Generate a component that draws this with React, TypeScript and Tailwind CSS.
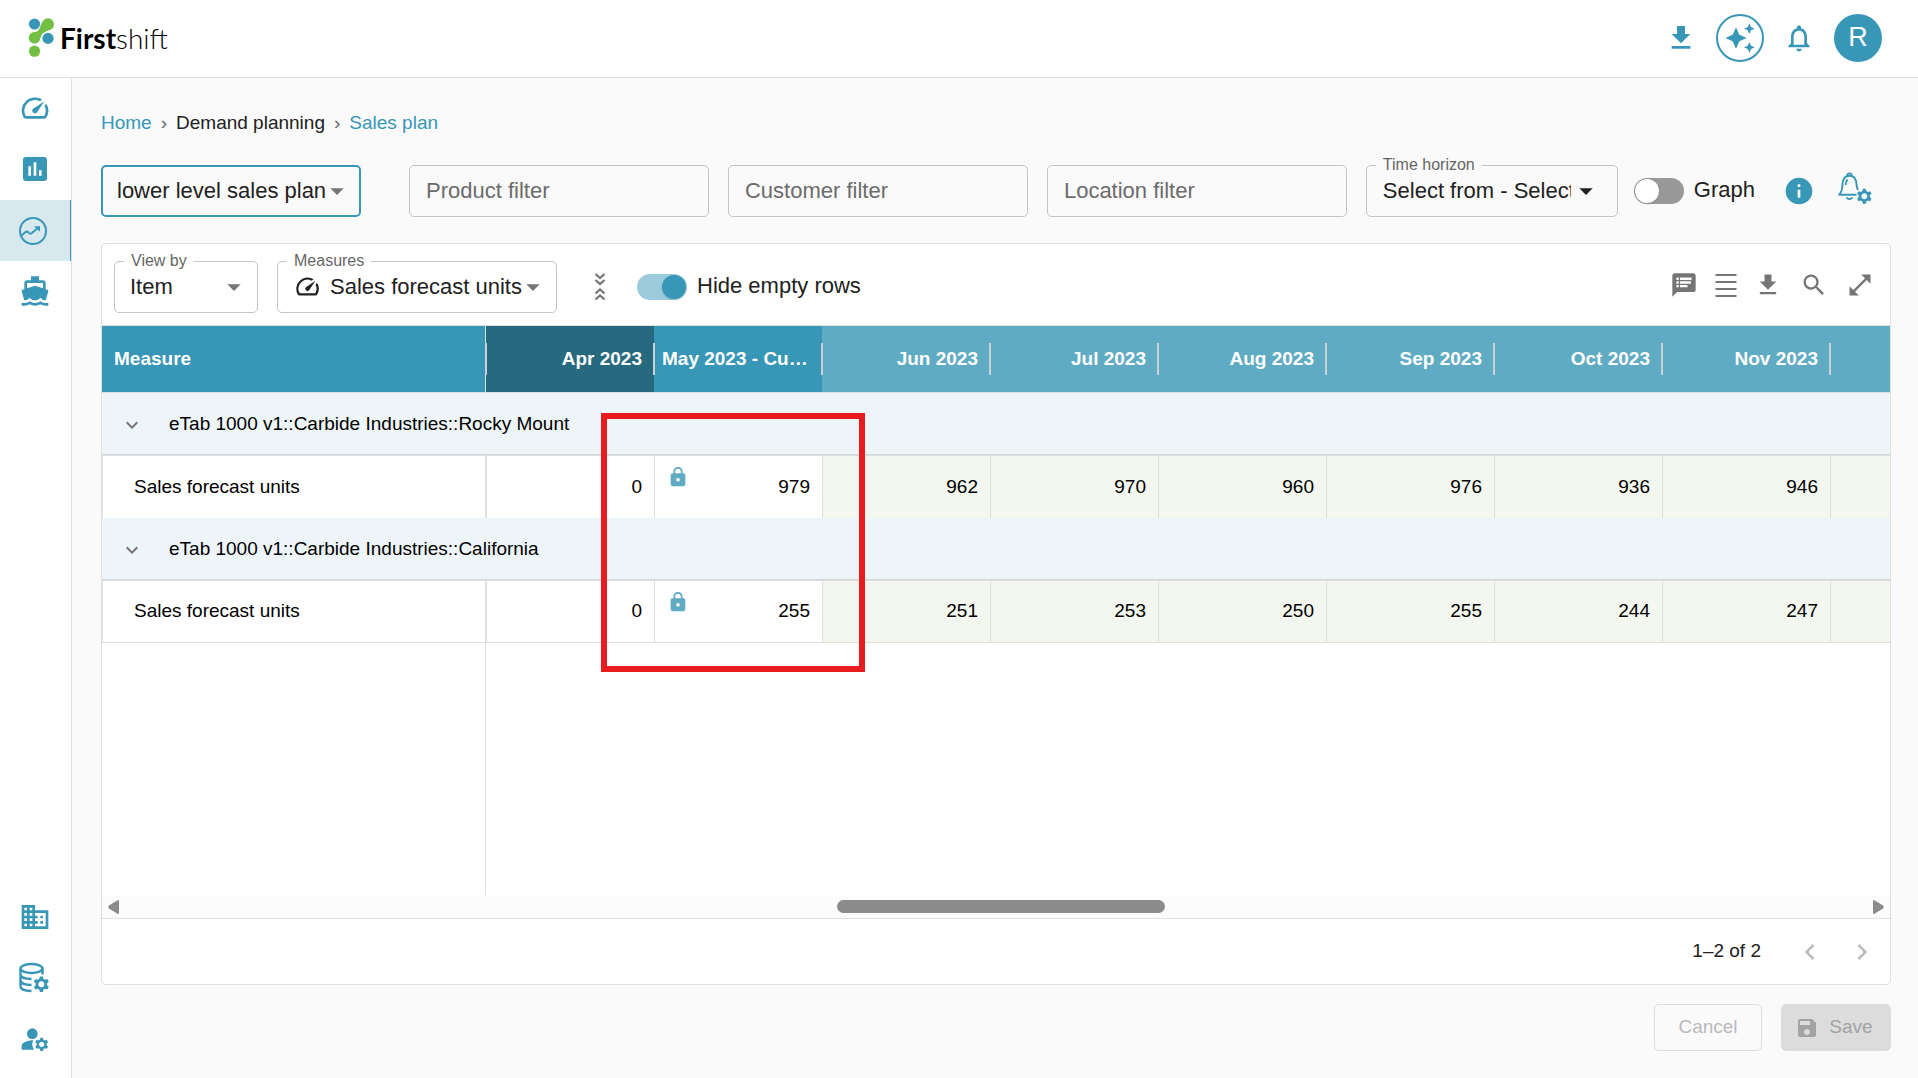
import type { ReactNode } from "react";
import {
    MdArrowDropDown,
    MdAssessment,
    MdAutoAwesome,
    MdChevronLeft,
    MdChevronRight,
    MdDirectionsBoat,
    MdDomain,
    MdExpandMore,
    MdInfo,
    MdLock,
    MdManageAccounts,
    MdNotificationsNone,
    MdOpenInFull,
    MdOutlineSpeed,
    MdSave,
    MdSearch,
} from "react-icons/md";

const GEAR =
    "M20.75 16c0-.22-.03-.42-.06-.63l1.14-1.01-1-1.73-1.45.49c-.32-.27-.68-.48-1.08-.63L18 11h-2l-.3 1.49c-.4.15-.76.36-1.08.63l-1.45-.49-1 1.73 1.14 1.01c-.03.21-.06.41-.06.63s.03.42.06.63l-1.14 1.01 1 1.73 1.45-.49c.32.27.68.48 1.08.63L16 21h2l.3-1.49c.4-.15.76-.36 1.08-.63l1.45.49 1-1.73-1.14-1.01c.03-.21.06-.41.06-.63zM17 18c-1.1 0-2-.9-2-2s.9-2 2-2 2 .9 2 2-.9 2-2 2z";

const months = [
    { label: "Apr 2023", head: "bg-[#276a80]", cell: "bg-white" },
    { label: "May 2023 - Current", head: "bg-[#3896b7]", cell: "bg-white" },
    { label: "Jun 2023", head: "bg-[#5fabc4]", cell: "bg-[#f3f7f0]" },
    { label: "Jul 2023", head: "bg-[#5fabc4]", cell: "bg-[#f3f7f0]" },
    { label: "Aug 2023", head: "bg-[#5fabc4]", cell: "bg-[#f3f7f0]" },
    { label: "Sep 2023", head: "bg-[#5fabc4]", cell: "bg-[#f3f7f0]" },
    { label: "Oct 2023", head: "bg-[#5fabc4]", cell: "bg-[#f3f7f0]" },
    { label: "Nov 2023", head: "bg-[#5fabc4]", cell: "bg-[#f3f7f0]" },
];

const groups = [
    { name: "eTab 1000 v1::Carbide Industries::Rocky Mount", values: [0, 979, 962, 970, 960, 976, 936, 946] },
    { name: "eTab 1000 v1::Carbide Industries::California", values: [0, 255, 251, 253, 250, 255, 244, 247] },
];

const DownloadIcon = ({ size }: { size: number }) => (
    <svg width={size} height={size} viewBox="0 0 24 24" fill="currentColor">
        <path d="M19 9h-4V3H9v6H5l7 7 7-7zM5 18v2h14v-2H5z" />
    </svg>
);

const Logo = () => (
    <div className="flex items-center gap-1.5">
        <svg width="26" height="40" viewBox="0 0 26 40">
            <path d="M5 14.500 C13 14 11 8 15 3 L23 11 C18 14 14 13 11 23 Z" fill="#72bf44" />
            <circle cx="6.5" cy="6" r="5.6" fill="#3896b7" />
            <circle cx="20" cy="6.2" r="6" fill="#72bf44" />
            <circle cx="6.5" cy="19.800" r="5.800" fill="#72bf44" />
            <circle cx="20" cy="20.400" r="6.600" fill="white" />
            <circle cx="20" cy="20.400" r="5.600" fill="#3896b7" />
            <circle cx="6.500" cy="33.200" r="5.600" fill="#72bf44" />
        </svg>
        <span className="font-[Lato] text-[28px] leading-8 text-black">
            <b className="font-bold">First</b>
            <span className="font-light">shift</span>
        </span>
    </div>
);

const TrendIcon = () => (
    <svg width="28" height="28" viewBox="0 0 28 28" fill="none" stroke="currentColor" strokeWidth="2">
        <circle cx="14" cy="14" r="13" />
        <path d="M2 19 L6.5 15 Q8 14 9.5 15.5 Q11.5 18 13.5 15.5 L19.5 10.5" />
        <path d="M15 9.2h6v5.6z" fill="currentColor" stroke="none" />
    </svg>
);

const DatabaseGearIcon = () => (
    <svg width="32" height="32" viewBox="0 0 32 32" fill="none" stroke="currentColor" strokeWidth="2.4">
        <ellipse cx="12.5" cy="6.500" rx="11" ry="4.500" />
        <path d="M1.500 6.500v18c0 2.500 4 4.500 11 4.500M23.500 6.500v6M1.500 12.500c0 2.500 4 4.500 11 4.500M1.500 18.500c0 2.500 4 4.500 11 4.500" />
        <path d={GEAR} transform="translate(-4 -2.500) scale(1.550)" fill="currentColor" stroke="none" />
    </svg>
);

const BellGearIcon = () => (
    <svg width="34" height="34" viewBox="0 0 34 34" fill="none" stroke="currentColor" strokeWidth="1.9">
        <path d="M1 22.500 C4.500 20 4 17 4.500 12 C5 6 8 3.800 11.500 3.800 C15 3.800 18 6 18.500 12 C18.700 15 19 16.500 20 18" />
        <path d="M.5 22.700H18.500M9.300 3.600a2.200 2.200 0 0 1 4.400 0M8.500 25.500c1.500 2 4.500 2 6 0M7.600 13c0-3 .8-4.500 2-5.500" />
        <path d={GEAR} transform="translate(.800 .200) scale(1.500)" fill="currentColor" stroke="none" />
    </svg>
);

const CollapseIcon = () => (
    <svg width="20" height="28" viewBox="0 0 20 28" fill="none" stroke="currentColor" strokeWidth="2.2">
        <path d="M5.500 1 10 5 14.500 1M5.500 7 10 11 14.500 7M5.500 20.500 10 16.500 14.500 20.500M5.500 26.500 10 22.500 14.500 26.500" />
    </svg>
);

const CommentIcon = () => (
    <svg width="28" height="28" viewBox="0 0 24 24">
        <path d="M20 2H4c-1.100 0-2 .900-2 2v18l4-4h14c1.100 0 2-.900 2-2V4c0-1.100-.900-2-2-2z" fill="currentColor" />
        <path d="M5.500 5.500h2v2.200h-2zM5.500 8.700h2v2.200h-2zM5.500 11.900h2V14h-2zM8.600 5.500h9.900v2.200H8.600zM8.600 8.700h9.400v2.200H8.600zM8.600 11.900h6.400V14H8.600z" fill="white" />
    </svg>
);

const LinesIcon = () => (
    <svg width="28" height="28" viewBox="0 0 28 28" fill="currentColor">
        <path d="M3.500 3h21v2h-21zM3.500 10h21v2h-21zM3.500 17h21v2h-21zM3.500 24h21v2h-21z" />
    </svg>
);

const SideItem = ({ label, active, children }: { label: string; active?: boolean; children: ReactNode }) => (
    <a
        href="#"
        aria-label={label}
        className={
            active
                ? "flex h-[61px] items-center justify-center border-r border-[#3896b7] bg-[#d7e9ef] pr-1"
                : "flex h-[61px] items-center justify-center pr-0.5 pb-px"
        }
    >
        {children}
    </a>
);

type SelectFieldProps = {
    id: string;
    value: string;
    label?: string;
    width: string;
    pad?: string;
    arrow?: string;
    surface?: string;
    border?: string;
    icon?: ReactNode;
};

const SelectField = ({
    id,
    value,
    label,
    width,
    pad = "pl-[15px] pr-9",
    arrow = "right-2 text-[#757575]",
    surface = "bg-white",
    border = "border border-[#c4c4c4]",
    icon,
}: SelectFieldProps) => (
    <div className={`relative shrink-0 ${width}`}>
        <select
            id={id}
            aria-label={label ?? "Plan"}
            className={`h-[52px] w-full appearance-none rounded-[5px] pb-0.5 text-[22px] text-[#212121] ${border} ${surface} ${pad}`}
        >
            <option>{value}</option>
        </select>
        {label && (
            <label htmlFor={id} className={`absolute -top-2 left-2.5 px-[7px] text-base leading-4 text-[#666] ${surface}`}>
                {label}
            </label>
        )}
        {icon}
        <MdArrowDropDown size={32} className={`pointer-events-none absolute top-2.5 ${arrow}`} />
    </div>
);

const FilterInput = ({ label }: { label: string }) => (
    <input
        type="text"
        aria-label={label}
        placeholder={label}
        className="h-[52px] min-w-0 flex-1 rounded-[5px] border border-[#c4c4c4] px-4 text-[22px] placeholder:text-[#6b6b6b]"
    />
);

const Toggle = ({ label, on }: { label: string; on?: boolean }) => (
    <label className="flex shrink-0 items-center gap-2.5 text-[22px] leading-7 text-[#212121]">
        <input
            type="checkbox"
            defaultChecked={on}
            className="flex h-[26px] w-[50px] appearance-none items-center rounded-full bg-[#999] px-px before:size-6 before:rounded-full before:bg-white before:shadow before:content-[''] checked:justify-end checked:bg-[#9ccbdb] checked:before:bg-[#3896b7]"
        />
        <span className="pb-0.5">{label}</span>
    </label>
);

const PlanTable = () => (
    <table className="w-[1728px] table-fixed border-separate border-spacing-0 text-[19px] text-black">
        <colgroup>
            <col className="w-[384px]" />
            {months.map((m) => (
                <col key={m.label} className="w-[168px]" />
            ))}
        </colgroup>
        <thead>
            <tr className="h-[67px] text-white">
                <th className="border-r border-b border-[#e0e0e0] bg-[#3896b7] pl-3 text-left font-bold">Measure</th>
                {months.map((m) => (
                    <th
                        key={m.label}
                        className={`relative border-b border-[#e0e0e0] pr-3 pl-2 text-right font-bold ${m.head}`}
                    >
                        <span className="absolute top-[17px] left-[-1px] h-8 w-0.5 bg-[#c8d0d3]" />
                        <div className="truncate">{m.label}</div>
                    </th>
                ))}
            </tr>
        </thead>
        {groups.map((g, i) => (
            <tbody key={g.name}>
                <tr className="h-[62px] bg-[#eef5f9]">
                    <td colSpan={9} className="border-b border-[#d0d8dc] pt-0.5">
                        <div className="flex items-center gap-[25px] pl-[18px]">
                            <button aria-label="Collapse group" className="text-[#757575]">
                                <MdExpandMore size={24} />
                            </button>
                            {g.name}
                        </div>
                    </td>
                </tr>
                <tr className={i === groups.length - 1 ? "h-[63px] *:border-b" : "h-[63px]"}>
                    <td className="border-x border-t border-[#e0e0e0] pl-[31px]">Sales forecast units</td>
                    {g.values.map((v, n) => (
                        <td
                            key={n}
                            className={`relative border-t border-l border-[#dcdfda] pr-3 text-right ${months[n].cell}`}
                        >
                            {n === 1 && <MdLock size={22} className="absolute top-2.5 left-3 text-[#5fabc4]" />}
                            {v}
                        </td>
                    ))}
                </tr>
            </tbody>
        ))}
    </table>
);

// The strip of the next month that shows past the last full column
const NextMonthEdge = () => (
    <div className="flex min-w-0 flex-1 flex-col">
        <div className="relative h-[67px] border-b border-[#e0e0e0] bg-[#5fabc4]">
            <span className="absolute top-[17px] left-[-1px] h-8 w-0.5 bg-[#c8d0d3]" />
        </div>
        {groups.map((g, i) => (
            <div key={g.name}>
                <div className="h-[62px] border-b border-[#d0d8dc] bg-[#eef5f9]" />
                <div
                    className={
                        i === groups.length - 1
                            ? "h-[63px] border-y border-l border-[#dcdfda] bg-[#f3f7f0]"
                            : "h-[63px] border-t border-l border-[#dcdfda] bg-[#f3f7f0]"
                    }
                />
            </div>
        ))}
    </div>
);

export default function App() {
    return (
        <div className="flex min-h-screen flex-col bg-[#fafafa] font-['Liberation_Sans',Arial,sans-serif] text-[#212121]">
            <header className="flex h-[78px] items-center justify-between border-b border-[#e0e0e0] bg-white pr-9 pb-px pl-7">
                <Logo />
                <div className="flex items-center gap-[19px] text-[#3896b7]">
                    <button aria-label="Downloads">
                        <DownloadIcon size={32} />
                    </button>
                    <button
                        aria-label="Assistant"
                        className="flex size-12 items-center justify-center rounded-full border-2 border-[#3896b7]"
                    >
                        <MdAutoAwesome size={32} />
                    </button>
                    <button aria-label="Notifications">
                        <MdNotificationsNone size={32} />
                    </button>
                    <button className="size-12 rounded-full bg-[#3896b7] pb-0.5 text-[27px] text-white">R</button>
                </div>
            </header>

            <div className="flex flex-1">
                <nav className="flex w-[72px] shrink-0 flex-col border-r border-[#e0e0e0] bg-white pb-2 text-[#3896b7]">
                    <SideItem label="Dashboard">
                        <MdOutlineSpeed size={32} />
                    </SideItem>
                    <SideItem label="Reports">
                        <MdAssessment size={32} />
                    </SideItem>
                    <SideItem label="Demand planning" active>
                        <TrendIcon />
                    </SideItem>
                    <SideItem label="Supply planning">
                        <MdDirectionsBoat size={32} />
                    </SideItem>
                    <div className="mt-auto">
                        <SideItem label="Organization">
                            <MdDomain size={32} />
                        </SideItem>
                        <SideItem label="Data settings">
                            <DatabaseGearIcon />
                        </SideItem>
                        <SideItem label="User settings">
                            <MdManageAccounts size={32} />
                        </SideItem>
                    </div>
                </nav>

                <main className="flex min-w-0 flex-1 flex-col pt-[33px] pr-[27px] pb-[27px] pl-[29px]">
                    <div className="flex gap-[9px] text-[19px] leading-6">
                        <a href="#" className="text-[#3896b7]">Home</a>
                        <span className="text-[#666]">›</span>
                        <span>Demand planning</span>
                        <span className="text-[#666]">›</span>
                        <a href="#" className="text-[#3896b7]">Sales plan</a>
                    </div>

                    {/* Filters */}
                    <div className="mt-[30px] flex items-center">
                        <SelectField
                            id="plan"
                            value="lower level sales plan"
                            width="w-[260px]"
                            pad="pl-3.5 pr-8"
                            surface="bg-[#fafafa]"
                            border="border-2 border-[#3896b7]"
                        />
                        <div className="mr-[19px] ml-12 flex min-w-0 flex-1 gap-[19px]">
                            <FilterInput label="Product filter" />
                            <FilterInput label="Customer filter" />
                            <FilterInput label="Location filter" />
                        </div>
                        <SelectField
                            id="horizon"
                            label="Time horizon"
                            value="Select from - Select to"
                            width="w-[252px] mr-4"
                            pad="pl-4 pr-[46px]"
                            arrow="right-4 text-[#212121]"
                            surface="bg-[#fafafa]"
                        />
                        <Toggle label="Graph" />
                        <div className="mr-[19px] ml-7 flex shrink-0 items-center gap-[23px] text-[#3896b7]">
                            <button aria-label="Information">
                                <MdInfo size={32} />
                            </button>
                            <button aria-label="Alert settings" className="pb-1">
                                <BellGearIcon />
                            </button>
                        </div>
                    </div>

                    <section className="mt-[26px] flex flex-1 flex-col rounded-[5px] border border-[#e0e0e0] bg-white">
                        <div className="flex items-center border-b border-[#e0e0e0] px-3 pt-[17px] pb-3">
                            <SelectField id="view-by" label="View by" value="Item" width="w-[144px]" />
                            <SelectField
                                id="measures"
                                label="Measures"
                                value="Sales forecast units"
                                width="ml-[19px] w-[280px]"
                                pad="pl-[52px] pr-8"
                                icon={<MdOutlineSpeed size={27} className="pointer-events-none absolute top-3 left-[17px]" />}
                            />
                            <button aria-label="Collapse all" className="mr-[27px] ml-[33px] text-[#757575]">
                                <CollapseIcon />
                            </button>
                            <Toggle label="Hide empty rows" on />
                            <div className="mr-1 ml-auto flex gap-[18px] pb-1 text-[#757575]">
                                <div className="flex gap-3.5">
                                    <button aria-label="Comments">
                                        <CommentIcon />
                                    </button>
                                    <button aria-label="Density">
                                        <LinesIcon />
                                    </button>
                                    <button aria-label="Download">
                                        <DownloadIcon size={28} />
                                    </button>
                                </div>
                                <button aria-label="Search">
                                    <MdSearch size={28} />
                                </button>
                                <button aria-label="Full screen">
                                    <MdOpenInFull size={28} />
                                </button>
                            </div>
                        </div>

                        <div className="relative flex flex-1 flex-col overflow-hidden">
                            <div className="flex">
                                <div className="shrink-0">
                                    <PlanTable />
                                </div>
                                <NextMonthEdge />
                            </div>
                            <div className="w-[384px] flex-1 border-r border-[#e0e0e0]" />
                            {/* Callout around the locked month */}
                            <div className="pointer-events-none absolute top-[87px] left-[499px] h-[259px] w-[264px] border-[6px] border-[#e81c1e]" />
                        </div>

                        {/* Horizontal scrollbar */}
                        <div className="flex h-6 items-center border-b border-[#e0e0e0] bg-[#fcfcfc] px-1.5 text-[#8b8b8b]">
                            <svg width="11" height="14" viewBox="0 0 11 14" fill="currentColor">
                                <path d="M10 0 Q11 0 11 1V13Q11 14 10 14L1 8.500Q-.500 7 1 5.500Z" />
                            </svg>
                            <div className="flex-[718]" />
                            <div className="h-[13px] flex-[328] rounded-full bg-[#8b8b8b]" />
                            <div className="flex-[708]" />
                            <svg width="11" height="14" viewBox="0 0 11 14" fill="currentColor">
                                <path d="M1 0Q0 0 0 1V13Q0 14 1 14L10 8.500Q11.500 7 10 5.500Z" />
                            </svg>
                        </div>

                        <div className="flex h-[65px] items-center justify-end pr-3 text-[19px]">
                            1–2 of 2
                            <button aria-label="Previous page" disabled className="mr-5 ml-[33px] text-[#bdbdbd]">
                                <MdChevronLeft size={32} />
                            </button>
                            <button aria-label="Next page" disabled className="text-[#bdbdbd]">
                                <MdChevronRight size={32} />
                            </button>
                        </div>
                    </section>

                    <div className="mt-[19px] flex justify-end gap-[19px] text-[19px]">
                        <button disabled className="h-[47px] w-[108px] rounded-[5px] border border-[#dcdcdc] text-[#bababa]">
                            Cancel
                        </button>
                        <button
                            disabled
                            className="flex h-[47px] w-[110px] items-center justify-center gap-2.5 rounded-[5px] bg-[#dcdcdc] pr-1 text-[#a3a3a3]"
                        >
                            <MdSave size={24} />
                            Save
                        </button>
                    </div>
                </main>
            </div>
        </div>
    );
}
